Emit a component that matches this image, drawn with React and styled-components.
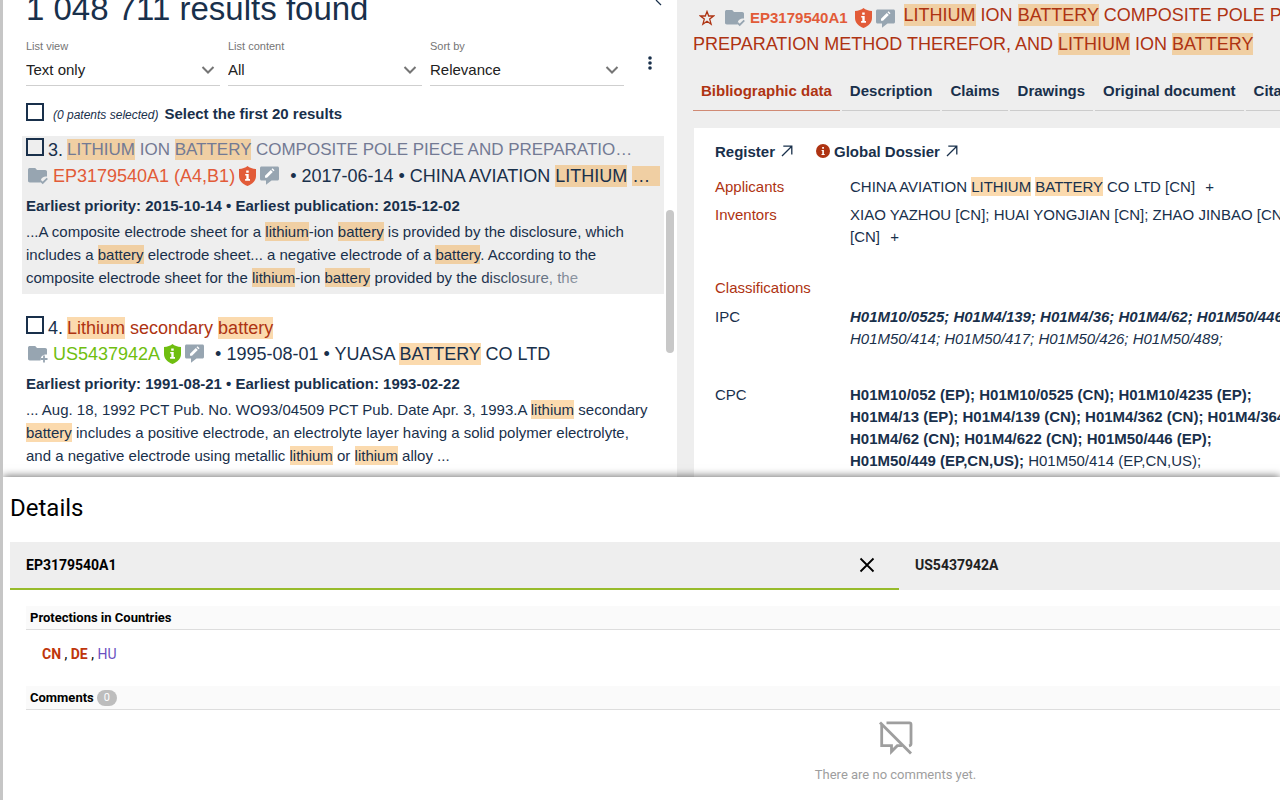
import React from "react";
import styled, { createGlobalStyle } from "styled-components";

const c = {
  navy: "#19304b",
  red: "#ae3312",
  orange: "#e25b38",
  green: "#6fbe10",
  steel: "#97a5b1",
  grey: "#eeeeee",
};

const Global = createGlobalStyle`
  *, *::before, *::after { box-sizing: border-box; }
  body { margin: 0; background: #fff; }
  h1, h2, h3, p, dl, dd, dt, ul { margin: 0; padding: 0; font-weight: 400; }
  a { color: inherit; text-decoration: none; }
  button { border: 0; background: none; padding: 0; font: inherit; color: inherit; cursor: pointer; }
  svg { display: block; flex: none; }
`;

const Page = styled.div`
  display: flex;
  flex-direction: column;
  height: 100vh;
  border-left: 3px solid #c6c6c6;
  overflow: hidden;
  color: ${c.navy};
  font-family: "Liberation Sans", Arial, sans-serif;
  font-size: 15px;
`;

const Workspace = styled.div`
  flex: 1 1 0;
  min-height: 0;
  display: grid;
  grid-template-columns: minmax(0, 674fr) minmax(0, 603fr);
  overflow: hidden;
`;

const Mark = styled.mark`
  padding: 1px 0;
  color: inherit;
  background: rgba(244, 149, 24, 0.35);
`;

/* results list */

const Results = styled.section`
  position: relative;
  overflow: hidden;
  padding-left: 19px;
  padding-right: 13px;
`;

const ResultsHead = styled.header`
  display: flex;
  justify-content: space-between;
  height: 40px;
  padding: 0 1px 0 4px;
`;

const ResultsTitle = styled.h1`
  font-size: 33px;
  line-height: 18px;
`;

const Filters = styled.div`
  display: flex;
  gap: 8px;
  padding-left: 4px;
`;

const Field = styled.div`
  position: relative;
  flex: 0 1 194px;
  display: flex;
  flex-direction: column;
  padding-bottom: 1px;
  border-bottom: 1px solid #cfcfcf;

  svg {
    position: absolute;
    right: 5px;
    bottom: 10px;
    pointer-events: none;
  }
`;

const FieldLabel = styled.label`
  font-size: 11px;
  line-height: 12px;
  color: #757575;
`;

const Select = styled.select`
  appearance: none;
  border: 0;
  background: none;
  padding: 0;
  margin-top: 3px;
  height: 29px;
  width: 100%;
  font: inherit;
  color: #212121;
`;

const MenuButton = styled.button`
  margin-left: 12px;
  align-self: center;
  padding: 0 4px;
`;

const SelectAll = styled.div`
  display: flex;
  align-items: center;
  gap: 9px;
  margin: 16px 0 15px 4px;
  height: 19px;
`;

const Check = styled.input.attrs({ type: "checkbox" })`
  appearance: none;
  flex: none;
  width: 18px;
  height: 18px;
  margin: 0;
  border: 2px solid ${c.navy};
`;

const SelectText = styled.label`
  display: flex;
  align-items: baseline;
  gap: 6px;
  padding-top: 5px;
  line-height: 17px;
  font-weight: 700;

  em {
    font-size: 12px;
    font-weight: 400;
  }
`;

const Result = styled.article`
  height: 158px;
  margin-bottom: 20px;
  padding: 1px 5px 0 4px;
  background: ${(p) => (p.$active ? c.grey : "#fff")};
`;

const ResultTitle = styled.h2`
  display: flex;
  align-items: center;
  height: 25px;
  font-size: 18px;
  line-height: 22px;
  white-space: nowrap;

  input {
    align-self: flex-start;
    margin-top: 1px;
  }
  label { margin: 0 4px; }
  a {
    color: ${(p) => (p.$visited ? "#737a94" : c.red)};
    font-size: ${(p) => (p.$compact ? "17px" : "18px")};
  }
`;

const Meta = styled.div`
  display: flex;
  align-items: center;
  height: 27px;
  padding-left: 2px;
  font-size: 18px;
  line-height: 20px;
  white-space: nowrap;
`;

const PubLink = styled.a`
  margin: 0 4px 0 5px;
  color: ${(p) => (p.$granted ? c.green : c.orange)};
`;

const Badges = styled.span`
  display: flex;
  align-items: center;
  gap: 4px;
`;

const Applicant = styled.span`
  margin-left: 11px;
`;

const Elided = styled(Mark)`
  display: inline-block;
  min-width: 28px;
  padding: 0;
`;

const Dates = styled.p`
  margin-top: 7px;
  line-height: 20px;
  font-size: 15px;
  font-weight: 700;
  white-space: nowrap;
`;

const Abstract = styled.p`
  position: relative;
  margin-top: 4px;
  line-height: 23px;
  white-space: nowrap;

  &::after {
    content: "";
    position: absolute;
    right: 0;
    bottom: 0;
    width: 180px;
    height: 23px;
    background: linear-gradient(to right, transparent, ${(p) => (p.$active ? c.grey : "#fff")});
  }
`;

const ScrollThumb = styled.div`
  position: absolute;
  right: 3px;
  top: 44%;
  width: 8px;
  height: 30%;
  border-radius: 4px;
  background: #c8c8c8;
`;

/* document panel */

const Doc = styled.section`
  overflow: hidden;
  padding: 1px 0 0 16px;
  background: ${c.grey};
  display: flex;
  flex-direction: column;
`;

const DocTitle = styled.h2`
  flex: none;
  font-size: 18px;
  line-height: 28px;
  white-space: nowrap;
  color: ${c.red};
`;

const DocTools = styled.span`
  display: inline-flex;
  align-items: center;
  vertical-align: middle;
  height: 28px;
  padding: 4px 9px 0 6px;
`;

const DocNumber = styled.a`
  margin: 0 7px 0 5px;
  font-size: 15px;
  font-weight: 700;
  color: ${c.orange};
`;

const Tabs = styled.nav`
  flex: none;
  display: flex;
  gap: 2px;
  margin-top: 14px;
  margin-bottom: 17px;
`;

const Tab = styled.a`
  flex: none;
  height: 39px;
  padding: 0 8px;
  line-height: 38px;
  font-weight: 700;
  border-bottom: 1px solid ${(p) => (p.$active ? "#d08a74" : "#cccccc")};
  color: ${(p) => (p.$active ? c.red : c.navy)};
`;

const DocCard = styled.div`
  flex: 1;
  margin-left: 1px;
  padding: 12px 0 0 21px;
  background: #fff;
`;

const DocLinks = styled.div`
  display: flex;
  gap: 23px;
  height: 22px;
  margin-bottom: 14px;
  font-weight: 700;
`;

const DocLink = styled.a`
  display: flex;
  align-items: center;
  gap: 4px;

  svg:last-child { margin-left: 2px; }
`;

const Data = styled.dl`
  display: grid;
  grid-template-columns: 135px minmax(0, 1fr);
  line-height: 22px;
  white-space: nowrap;
`;

const Term = styled.dt`
  color: ${(p) => (p.$plain ? c.navy : c.red)};
`;

const Value = styled.dd`
  margin-bottom: ${(p) => p.$gap || 6}px;
  button { margin-left: 6px; }
`;

/* details drawer */

const Drawer = styled.section`
  position: relative;
  flex: none;
  padding: 16px 0 17px 7px;
  background: #fff;
  color: #000;
  box-shadow: 0 -1px 8px rgba(0, 0, 0, 0.55);
  font-family: Roboto, sans-serif;
`;

const DrawerTitle = styled.h2`
  font-size: 24px;
  line-height: 30px;
`;

const DrawerBody = styled.div`
  width: 140%;
  margin-top: 19px;
`;

const DrawerTabs = styled.div`
  display: grid;
  grid-template-columns: 1fr 1fr;
  height: 48px;
  background: ${c.grey};
`;

const DrawerTab = styled.div`
  display: flex;
  align-items: center;
  justify-content: space-between;
  padding: 0 24px 0 16px;
  border-bottom: 2px solid ${(p) => (p.$active ? "#97bb2b" : c.grey)};
  font-size: 14px;
  font-weight: 700;
  color: ${(p) => (p.$active ? "#000" : "#212121")};
`;

const Group = styled.section`
  margin: ${(p) => p.$top}px 23px 0 16px;
`;

const GroupTitle = styled.h3`
  display: flex;
  align-items: center;
  gap: 3px;
  height: 24px;
  padding-left: 4px;
  border-bottom: 1px solid #dddddd;
  background: #fafafa;
  font-size: 13px;
  line-height: 20px;
  font-weight: 700;
`;

const Count = styled.span`
  padding: 0 7px;
  border-radius: 8px;
  background: #bdbdbd;
  color: #fff;
  font-size: 11px;
  font-weight: 400;
  line-height: 16px;
`;

const Countries = styled.p`
  height: 56px;
  padding: 14px 0 0 16px;
  font-size: 14px;
  line-height: 20px;
`;

const Country = styled.a`
  color: ${(p) => (p.$pending ? "#6a4fc0" : "#bf360c")};
  font-weight: ${(p) => (p.$pending ? 400 : 700)};
`;

const Empty = styled.div`
  display: flex;
  flex-direction: column;
  align-items: center;
  gap: 12px;
  padding-top: 11px;
  color: #9e9e9e;
  font-size: 13px;
  line-height: 16px;
`;

/* icons */

const Chevron = () => (
  <svg width="14" height="10" viewBox="0 0 14 10" fill="none" stroke="#757575" strokeWidth="2">
    <path d="M1.5 2 7 7.500 12.500 2" />
  </svg>
);

const Folder = ({ mode }) => (
  <svg width="20" height="18" viewBox="0 0 20 18">
    <path
      fill={c.steel}
      d="M1.800 1H7.200L9 3H17.200C18.200 3 19 3.800 19 4.700V9.600C17.500 9.200 15.800 9.500 14.700 10.400C13.200 11.400 12.500 13 12.600 15.500H1.800C.8 15.500 0 14.800 0 13.800V2.700C0 1.700.8 1 1.800 1Z"
    />
    <path
      fill="none"
      stroke={c.steel}
      strokeWidth="1.800"
      d={mode === "plus" ? "M16 10.500V17.500M12.500 14H19.500" : "M12.300 13.700 14.700 16 19.300 11.400"}
    />
  </svg>
);

const Shield = ({ color }) => (
  <svg width="17" height="20" viewBox="0 0 17 20">
    <path
      fill={color}
      d="M8.500 0C10.500 1.800 13.500 2.800 17 3V10C17 14.500 13.500 18.200 8.500 20C3.500 18.200 0 14.500 0 10V3C3.500 2.800 6.500 1.800 8.500 0Z"
    />
    <path fill="#fff" d="M7.200 4.500H9.700V6.800H7.200ZM6.200 8H9.700V13H11V14.700H6.100V13H7.300V9.600H6.200Z" />
  </svg>
);

const Note = () => (
  <svg width="19" height="19" viewBox="0 0 19 19">
    <path
      fill={c.steel}
      d="M1.500.5H17.500C18.300.5 19 1.200 19 2V13C19 13.900 18.300 14.500 17.500 14.500H11.500L6 18.800V14.500H1.500C.7 14.500 0 13.900 0 13V2C0 1.200.7.500 1.500.500Z"
    />
    <path fill="#fff" d="M5 11.800V9.800L10.800 4 12.800 6 7 11.800ZM11.500 3.300 12.500 2.300 14.500 4.300 13.500 5.300Z" />
  </svg>
);

const Star = () => (
  <svg width="16" height="16" viewBox="0 0 16 16" fill="none" stroke={c.red} strokeWidth="1.300">
    <path d="M8 1.500 9.700 6H14.600L10.700 9.100 12.100 14.200 8 11.300 3.900 14.200 5.300 9.100 1.400 6H6.300Z" />
  </svg>
);

const Arrow = () => (
  <svg width="12" height="12" viewBox="0 0 12 12" fill="none" stroke={c.navy} strokeWidth="1.300">
    <path d="M1 11 10.800 1.200M2.300 1.200H10.800V9.600" />
  </svg>
);

const Info = () => (
  <svg width="14" height="14" viewBox="0 0 14 14">
    <circle cx="7" cy="7" r="7" fill={c.red} />
    <path fill="#fff" d="M6.200 3H7.900V4.700H6.200ZM5.600 5.900H7.900V9.900H8.700V10.900H5.500V9.900H6.300V6.900H5.600Z" />
  </svg>
);

const Dots = () => (
  <svg width="4" height="14" viewBox="0 0 4 14" fill={c.navy}>
    <circle cx="2" cy="2" r="1.800" />
    <circle cx="2" cy="7" r="1.800" />
    <circle cx="2" cy="12" r="1.800" />
  </svg>
);

const Expand = () => (
  <svg width="8" height="6" viewBox="0 0 8 6" fill="none" stroke={c.navy} strokeWidth="1.200">
    <path d="M1 0 6 5" />
  </svg>
);

const Cross = () => (
  <svg width="16" height="16" viewBox="0 0 16 16" fill="none" stroke="#000" strokeWidth="1.800">
    <path d="M1.500 1.500 14.500 14.500M14.500 1.500 1.500 14.500" />
  </svg>
);

const NoComments = () => (
  <svg width="34" height="34" viewBox="0 0 34 34" fill="none" stroke="#9e9e9e" strokeWidth="2.800">
    <path d="M1 1.500 32 32.500" />
    <path d="M7.500 1.900H30.500Q32 1.900 32 3.400V23Q32 24.300 30 24.800" />
    <path d="M2.700 4V24.700H12.500V30.500L18.300 24.700H23" />
  </svg>
);

const Filter = ({ id, label, value }) => (
  <Field>
    <FieldLabel htmlFor={id}>{label}</FieldLabel>
    <Select id={id} defaultValue={value}>
      <option>{value}</option>
    </Select>
    <Chevron />
  </Field>
);

export default function App() {
  return (
    <>
      <Global />
      <Page>
        <Workspace>
          <Results>
            <ResultsHead>
              <ResultsTitle>1 048 711 results found</ResultsTitle>
              <Expand />
            </ResultsHead>
            <Filters>
              <Filter id="view" label="List view" value="Text only" />
              <Filter id="content" label="List content" value="All" />
              <Filter id="sort" label="Sort by" value="Relevance" />
              <MenuButton aria-label="More options"><Dots /></MenuButton>
            </Filters>
            <SelectAll>
              <Check id="all" />
              <SelectText htmlFor="all">
                <em>(0 patents selected)</em> Select the first 20 results
              </SelectText>
            </SelectAll>

            <Result $active>
              <ResultTitle $visited $compact>
                <Check id="r3" />
                <label htmlFor="r3">3.</label>
                <a href="#r3">
                  <Mark>LITHIUM</Mark> ION <Mark>BATTERY</Mark> COMPOSITE POLE PIECE AND PREPARATIO…
                </a>
              </ResultTitle>
              <Meta>
                <Folder mode="check" />
                <PubLink href="#ep">EP3179540A1 (A4,B1)</PubLink>
                <Badges>
                  <Shield color={c.orange} />
                  <Note />
                </Badges>
                <Applicant>
                  • 2017-06-14 • CHINA AVIATION <Mark>LITHIUM</Mark> <Elided>…</Elided>
                </Applicant>
              </Meta>
              <Dates>Earliest priority: 2015-10-14 • Earliest publication: 2015-12-02</Dates>
              <Abstract $active>
                ...A composite electrode sheet for a <Mark>lithium</Mark>-ion <Mark>battery</Mark> is provided by the
                disclosure, which
                <br />
                includes a <Mark>battery</Mark> electrode sheet... a negative electrode of a <Mark>battery</Mark>.
                According to the
                <br />
                composite electrode sheet for the <Mark>lithium</Mark>-ion <Mark>battery</Mark> provided by the
                disclosure, the
              </Abstract>
            </Result>

            <Result>
              <ResultTitle>
                <Check id="r4" />
                <label htmlFor="r4">4.</label>
                <a href="#r4">
                  <Mark>Lithium</Mark> secondary <Mark>battery</Mark>
                </a>
              </ResultTitle>
              <Meta>
                <Folder mode="plus" />
                <PubLink href="#us" $granted>US5437942A</PubLink>
                <Badges>
                  <Shield color={c.green} />
                  <Note />
                </Badges>
                <Applicant>
                  • 1995-08-01 • YUASA <Mark>BATTERY</Mark> CO LTD
                </Applicant>
              </Meta>
              <Dates>Earliest priority: 1991-08-21 • Earliest publication: 1993-02-22</Dates>
              <Abstract>
                ... Aug. 18, 1992 PCT Pub. No. WO93/04509 PCT Pub. Date Apr. 3, 1993.A <Mark>lithium</Mark> secondary
                <br />
                <Mark>battery</Mark> includes a positive electrode, an electrolyte layer having a solid polymer
                electrolyte,
                <br />
                and a negative electrode using metallic <Mark>lithium</Mark> or <Mark>lithium</Mark> alloy ...
              </Abstract>
            </Result>
            <ScrollThumb />
          </Results>

          <Doc>
            <DocTitle>
              <DocTools>
                <Star />
                &nbsp;&nbsp;<Folder mode="check" />
                <DocNumber href="#ep">EP3179540A1</DocNumber>
                <Badges>
                  <Shield color={c.orange} />
                  <Note />
                </Badges>
              </DocTools>
              <Mark>LITHIUM</Mark> ION <Mark>BATTERY</Mark> COMPOSITE POLE PIECE AND
              <br />
              PREPARATION METHOD THEREFOR, AND <Mark>LITHIUM</Mark> ION <Mark>BATTERY</Mark>
            </DocTitle>
            <Tabs>
              <Tab href="#bib" $active>Bibliographic data</Tab>
              <Tab href="#desc">Description</Tab>
              <Tab href="#claims">Claims</Tab>
              <Tab href="#drawings">Drawings</Tab>
              <Tab href="#orig">Original document</Tab>
              <Tab href="#cit">Citations</Tab>
            </Tabs>
            <DocCard>
              <DocLinks>
                <DocLink href="#register">Register <Arrow /></DocLink>
                <DocLink href="#dossier"><Info />Global Dossier <Arrow /></DocLink>
              </DocLinks>
              <Data>
                <Term>Applicants</Term>
                <Value>
                  CHINA AVIATION <Mark>LITHIUM</Mark> <Mark>BATTERY</Mark> CO LTD [CN] <button>+</button>
                </Value>
                <Term>Inventors</Term>
                <Value $gap={29}>
                  XIAO YAZHOU [CN]; HUAI YONGJIAN [CN]; ZHAO JINBAO [CN]
                  <br />
                  [CN] <button>+</button>
                </Value>
                <Term>Classifications</Term>
                <Value $gap={29} />
                <Term $plain>IPC</Term>
                <Value $gap={34}>
                  <i>
                    <b>H01M10/0525; H01M4/139; H01M4/36; H01M4/62; H01M50/446;</b>
                    <br />
                    H01M50/414; H01M50/417; H01M50/426; H01M50/489;
                  </i>
                </Value>
                <Term $plain>CPC</Term>
                <Value>
                  <b>
                    H01M10/052 (EP); H01M10/0525 (CN); H01M10/4235 (EP);
                    <br />
                    H01M4/13 (EP); H01M4/139 (CN); H01M4/362 (CN); H01M4/364 (EP);
                    <br />
                    H01M4/62 (CN); H01M4/622 (CN); H01M50/446 (EP);
                    <br />
                    H01M50/449 (EP,CN,US);
                  </b>{" "}
                  H01M50/414 (EP,CN,US);
                  <br />
                  H01M50/417 (EP,CN,US); H01M50/426 (EP,CN,US);
                </Value>
              </Data>
            </DocCard>
          </Doc>
        </Workspace>

        <Drawer>
          <DrawerTitle>Details</DrawerTitle>
          <DrawerBody>
            <DrawerTabs>
              <DrawerTab $active>
                EP3179540A1
                <button aria-label="Close EP3179540A1"><Cross /></button>
              </DrawerTab>
              <DrawerTab>US5437942A</DrawerTab>
            </DrawerTabs>
            <Group $top={16}>
              <GroupTitle>Protections in Countries</GroupTitle>
              <Countries>
                <Country href="#cn">CN</Country> , <Country href="#de">DE</Country> ,{" "}
                <Country href="#hu" $pending>HU</Country>
              </Countries>
            </Group>
            <Group $top={0}>
              <GroupTitle>
                Comments <Count>0</Count>
              </GroupTitle>
              <Empty>
                <NoComments />
                There are no comments yet.
              </Empty>
            </Group>
          </DrawerBody>
        </Drawer>
      </Page>
    </>
  );
}
